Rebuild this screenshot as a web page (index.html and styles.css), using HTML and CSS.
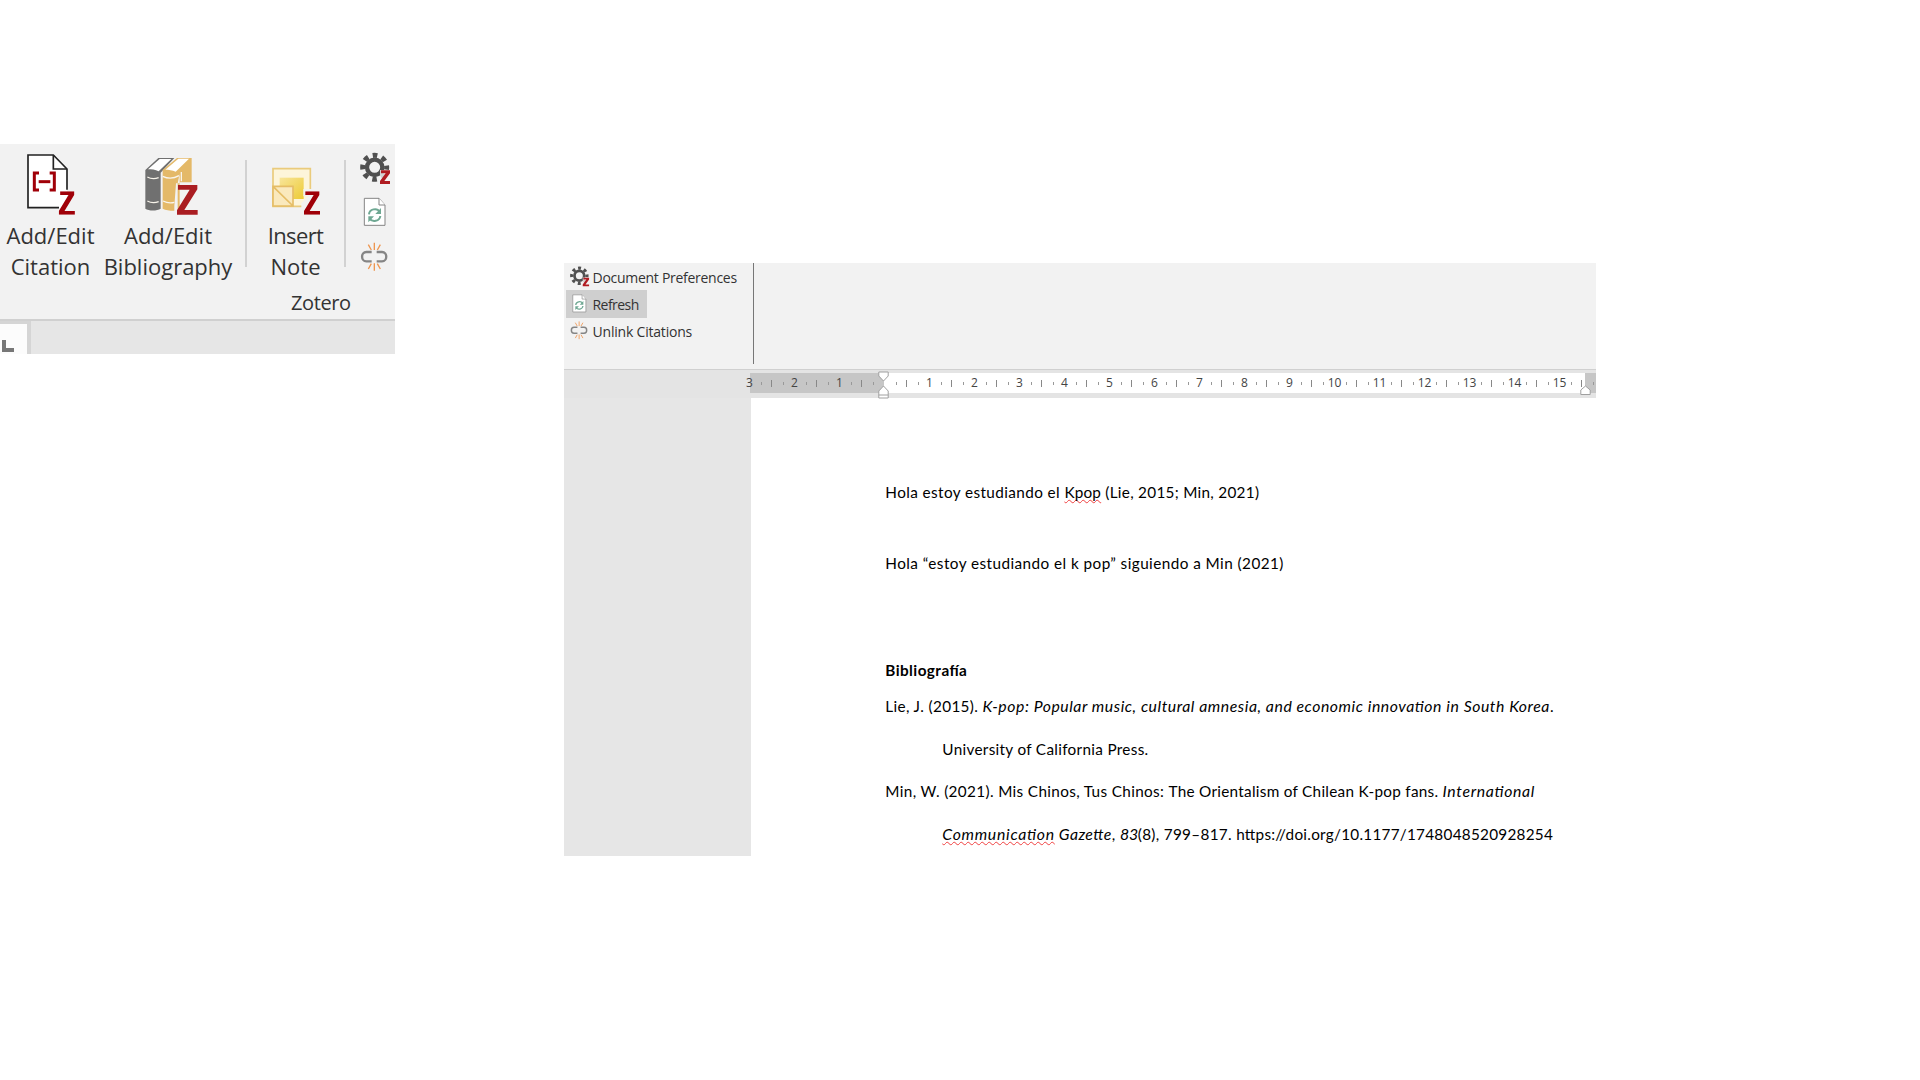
FILE: index.html
```
<!DOCTYPE html>
<html lang="es">
<head>
<meta charset="utf-8">
<title>Zotero</title>
<link rel="stylesheet" href="styles.css">
</head>
<body>
<svg class="sprite" aria-hidden="true">
  <symbol id="z" viewBox="0 0 48 70"><path d="M4 0H46V11L17 59H48V70H0V59L29 11H4Z"/></symbol>
  <symbol id="gear" viewBox="480 51 99 99">
    <g fill="none" stroke="#505050"><circle cx="524" cy="97" r="23" stroke-width="13"/>
    <circle cx="524" cy="97" r="36" stroke-width="15" stroke-dasharray="14 14.27" stroke-dashoffset="7"/></g>
    <path d="M540 105H572V147H540Z" fill="#f2f2f2" opacity=".8"/>
    <path d="M543 106H570V115L553 138H570V147H540V138L557 115H543Z" fill="#b01c22"/>
  </symbol>
  <symbol id="refresh" viewBox="480 186 99 90">
    <path d="M493 190H537L555 210V271H493Z" fill="#fff" stroke="#858585" stroke-width="3"/>
    <path d="M537 190V210H555" fill="#fff" stroke="#858585" stroke-width="3"/>
    <path d="M507 238C508 222 531 217 539 230M541 243C539 259 517 263 509 251" fill="none" stroke="#6fa893" stroke-width="6"/>
    <path d="M543 219V237H526ZM505 262V244H522Z" fill="#6fa893"/>
  </symbol>
  <symbol id="unlink" viewBox="480 321 99 90">
    <path d="M515 351H499C482 351 482 379 499 379H515M530 351H546C563 351 563 379 546 379H530" fill="none" stroke="#858585" stroke-width="7"/>
    <path d="M523 323V345M505 329L514 345M541 329L532 345M523 385V407M505 402L514 386M541 402L532 386" stroke="#ee9650" stroke-width="4"/>
  </symbol>
</svg>

<section class="toolbar">
  <div class="tools">
    <div class="tool citation">
      <svg width="52" height="65" viewBox="72 51 156 195">
        <path d="M84 60H160L201 102V219H84Z" fill="#fff"/>
        <path d="M201 164V102L160 60H84V218H177" fill="none" stroke="#222" stroke-width="5"/>
        <path d="M160 60V102H201" fill="none" stroke="#222" stroke-width="5"/>
        <path d="M117 114H103V165H117M149 114H163V165H149" fill="none" stroke="#a00008" stroke-width="9"/>
        <path d="M116 140H151" stroke="#a00008" stroke-width="9"/>
        <use href="#z" x="176" y="169" width="49" height="70" fill="#a00008"/>
      </svg>
      <span>Add/Edit</span><span>Citation</span>
    </div>
    <div class="tool bibliography">
      <svg width="58" height="65" viewBox="425 51 174 195">
        <path d="M435 105L474 69H522L481 113V221C470 228 445 228 435 221Z" fill="#707070"/>
        <path d="M443 103L478 72H513L475 109C465 104 453 103 443 103Z" fill="#fff"/>
        <path d="M487 105L530 69H574V142H538V226C518 229 500 227 487 221Z" fill="#e4b968"/>
        <path d="M495 104L534 71H566L526 110C516 105 505 104 495 104Z" fill="#fff"/>
        <path d="M441 126C452 132 464 132 475 128M441 198C452 204 464 204 475 200M487 124C502 131 520 131 536 122M488 198C500 204 510 205 522 202M543 111V139" fill="none" stroke="#f8f4eb" stroke-width="4"/>
        <path d="M527 145H538V116L532 145V240H522V214Z" fill="#f2f2f2"/>
        <path d="M533 150H591V163L552 225H592V239H530V226L568 164H533Z" fill="#aa1d22"/>
      </svg>
      <span>Add/Edit</span><span>Bibliography</span>
    </div>
    <i class="divider"></i>
    <div class="tool note">
      <svg width="52" height="65" viewBox="210 51 156 195">
        <defs><linearGradient id="ng" x1="0" y1="0" x2="1" y2="1"><stop offset="0" stop-color="#f8e59a"/><stop offset="1" stop-color="#edcb35"/></linearGradient></defs>
        <path d="M219 101H331V214H219Z" fill="#fdf5da" stroke="#eacb7c" stroke-width="5"/>
        <path d="M239 128H311V192H239Z" fill="url(#ng)"/>
        <path d="M219 154H279V213H219ZM219 154L279 213" fill="#fae9bd" stroke="#e5bd66" stroke-width="5"/>
        <path d="M310 162H366V245H304V205L326 184H310Z" fill="#f2f2f2"/>
        <use href="#z" x="311" y="169" width="50" height="70" fill="#a00008"/>
      </svg>
      <span class="tight">Insert</span><span>Note</span>
    </div>
    <i class="divider"></i>
    <div class="mini">
      <svg width="33" height="33"><use href="#gear"/></svg>
      <svg width="33" height="30"><use href="#refresh"/></svg>
      <svg width="33" height="30"><use href="#unlink"/></svg>
    </div>
  </div>
  <div class="group-name"><span>Zotero</span></div>
  <div class="strip"><div class="corner"><i></i></div></div>
</section>

<section class="word">
  <div class="ribbon">
    <div class="menu">
      <div class="item"><svg width="21" height="21"><use href="#gear"/></svg><span>Document Preferences</span></div>
      <div class="item active"><svg width="21" height="19"><use href="#refresh"/></svg><span>Refresh</span></div>
      <div class="item unlink"><svg width="21" height="19"><use href="#unlink"/></svg><span>Unlink Citations</span></div>
    </div>
  </div>
  <div class="ruler-row">
    <div class="ruler">
      <b class="first">3</b><b>2</b><b>1</b><b></b><b>1</b><b>2</b><b>3</b><b>4</b><b>5</b><b>6</b><b>7</b><b>8</b><b>9</b><b>10</b><b>11</b><b>12</b><b>13</b><b>14</b><b>15</b><b class="last"></b>
    </div>
    <svg class="marker indent" width="11" height="28" viewBox="0 0 11 28"><path d="M.8 1H10.2V5L5.5 10L.8 5ZM5.5 15L10.2 20V27H.8V20ZM.8 24H10.2" fill="#fff" stroke="#a0a0a0"/></svg>
    <svg class="marker margin" width="11" height="11" viewBox="0 0 11 11"><path d="M5.5 1L10.2 5V9.5H.8V5Z" fill="#fff" stroke="#a0a0a0"/></svg>
  </div>
  <div class="workspace">
    <div class="gutter"></div>
    <div class="page">
      <p class="intro"><span class="s40">Hola estoy estudiando el </span><span class="typo s20">Kpop</span><span class="s28"> (Lie, 2015; Min, 2021)</span></p>
      <p class="quote s45"><span>Hola “estoy estudiando el k pop” siguiendo a Min (2021)</span></p>
      <h2 class="s45"><span>Bibliografía</span></h2>
      <p class="book"><span class="s34">Lie, J. (2015). </span><em class="s55">K-pop: Popular music, cultural amnesia, and economic innovation in South Korea</em><span>.</span></p>
      <p class="entry hang"><span class="s30">University of California Press.</span></p>
      <p class="entry"><span class="s34">Min, W. (2021). </span><span class="s34">Mis Chinos, Tus Chinos: </span><span class="s28">The Orientalism of Chilean K-pop fans. </span><em class="s67">International</em></p>
      <p class="entry hang"><em class="typo s72">Communication</em><em class="s40"> Gazette</em><span class="s45">, </span><em class="volume">83</em><span class="s30">(8), 799–817. </span><span class="s26">https://doi.org/10.1177/1748048520928254</span></p>
    </div>
  </div>
</section>
</body>
</html>
```
FILE: styles.css
```
*{box-sizing:border-box}
body{margin:0;width:1920px;height:1080px;overflow:hidden;background:#fff;display:flex;align-items:flex-start;font-family:"Open Sans",sans-serif;color:#333}
.sprite{position:absolute;width:0;height:0}
svg{display:block;flex:none}

/* Zotero toolbar */
.toolbar{width:395px;height:210px;margin-top:144px;background:#f2f2f2;flex:none}
.tools{display:flex;height:141px}
.tool{display:flex;flex-direction:column;align-items:center;padding-top:8px;font-size:22px;line-height:31px;white-space:pre}
.tool svg{margin-bottom:3px}
.tight{letter-spacing:-.6px}
.citation{width:101px}
.citation svg{margin-right:1px}
.bibliography{width:134px;margin-right:10px}
.bibliography svg{margin-left:5px}
.note{width:97px}
.divider{width:2px;height:107px;margin-top:16px;background:#d2d2d2}
.mini{display:flex;flex-direction:column;padding:8px 0 0 14px}
.mini svg + svg{margin-top:12px}
.mini svg + svg + svg{margin-top:15px}
.group-name{height:34px;padding-left:291px;font-size:20px;line-height:36px;letter-spacing:-.4px}
.strip{height:35px;background:#e6e6e6;border-top:2px solid #d0d0d0}
.corner{width:31px;height:33px;background:#fcfcfc;border:solid #d5d5d5;border-width:3px 4px 0 0;padding:16px 0 0 2px}
.corner i{display:block;width:12px;height:12px;border:solid #777;border-width:0 0 4px 4px}

/* Word window */
.word{width:1032px;height:593px;margin:263px 0 0 169px;flex:none}
.ribbon{height:106px;background:#f2f2f2}
.menu{width:190px;height:101px;border-right:1.5px solid #777;padding-left:2px}
.item{display:flex;align-items:center;height:27.3px;padding-left:4px;gap:1.5px;font-size:14px;letter-spacing:-.28px;white-space:pre}
.item span{padding-top:1.5px}
.active{width:81px;letter-spacing:-.55px;background:#cfcfcf}
.unlink{letter-spacing:-.2px}
.unlink svg{margin-top:-1px}

/* Ruler: one 45px cell per centimetre */
.ruler-row{position:relative;height:29px;background:#e4e4e4;border-top:1px solid #d0d0d0;padding:3px 0 0 186px}
.ruler{display:flex;height:20px;background:linear-gradient(90deg,#c6c6c6 134px,#fff 134px 835px,#c6c6c6 835px)}
.ruler b{flex:none;width:45px;height:20px;font:12px/20px "Open Sans",sans-serif;color:#444;text-align:center;background:linear-gradient(#999,#999) 11px 9px/1px 3px no-repeat,linear-gradient(#999,#999) 34px 9px/1px 3px no-repeat,linear-gradient(#888,#888) 44px 7px/1px 7px no-repeat}
.ruler .first{margin-left:-23px;background-position:-9px 9px,34px 9px,44px 7px}
.ruler .last{width:15px}
.marker{position:absolute}
.indent{left:314px;top:1px}
.margin{left:1016px;top:15px}

/* Document */
.workspace{display:flex;height:458px}
.gutter{width:187px;background:#e6e6e6}
.page{flex:1;padding:0 0 0 134.3px;font-family:Lato,sans-serif;font-size:15.3px;line-height:20px;font-feature-settings:"liga" 1;color:#000}
.page p,.page h2{margin:0;height:20px;white-space:pre;font-size:inherit}
.page em{font-size:15.8px}
.page .intro{margin-top:84px}
.page .quote{margin-top:51px}
.page h2{margin-top:87px;font-weight:700}
.page .book{margin-top:16px}
.page .entry{margin-top:22.6px}
.page .hang{margin-left:57px}
.typo{text-decoration:underline wavy #f04040 1px;text-underline-offset:1px;text-decoration-skip-ink:none}
.volume{letter-spacing:-.3px}
.s20{letter-spacing:.2px}
.s26{letter-spacing:.26px}
.s28{letter-spacing:.28px}
.s30{letter-spacing:.31px}
.s34{letter-spacing:.35px}
.s40{letter-spacing:.4px}
.s45{letter-spacing:.44px}
.s55{letter-spacing:.55px}
.s67{letter-spacing:.67px}
.s72{letter-spacing:.72px}
```
